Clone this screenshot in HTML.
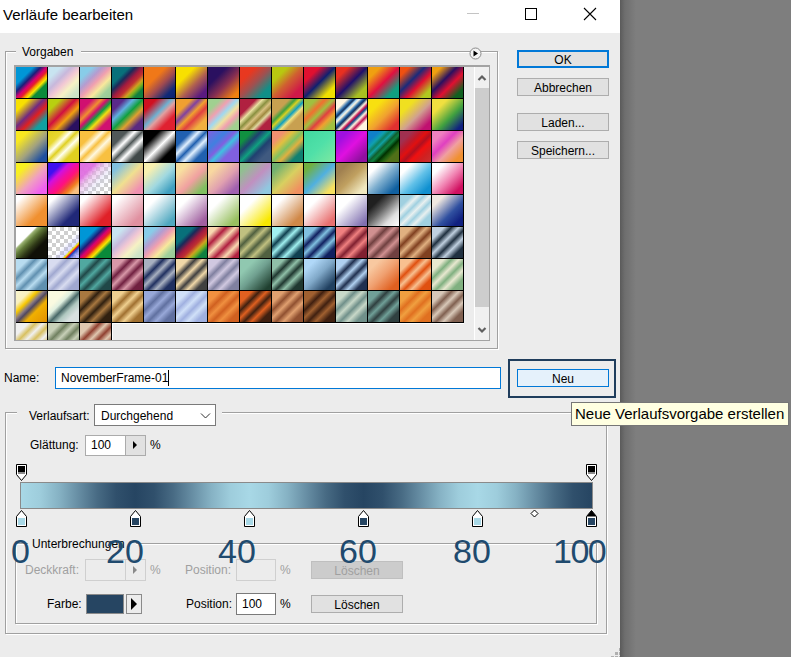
<!DOCTYPE html>
<html><head><meta charset="utf-8">
<style>
*{box-sizing:border-box;margin:0;padding:0}
html,body{width:791px;height:657px;overflow:hidden;background:#7e7e7e;font-family:"Liberation Sans",sans-serif;font-size:12px;color:#000}
.a{position:absolute}
#win{position:absolute;left:0;top:0;width:620px;height:657px;background:#ececec}
#shadow{position:absolute;left:620px;top:0;width:16px;height:657px;background:linear-gradient(to right,#5a5a5a,#6e6e6e 30%,#7e7e7e)}
#title{position:absolute;left:0;top:0;width:620px;height:33px;background:#fff}
.t{position:absolute;white-space:nowrap;line-height:1}
.gb{position:absolute;border:1px solid #a0a0a0;box-shadow:1px 1px 0 #fff inset, 1px 1px 0 #fff}
.btn{position:absolute;background:#e1e1e1;border:1px solid #adadad;text-align:center;font-size:12px;line-height:16px;padding-top:1px}
.inp{position:absolute;background:#fff;border:1px solid #7a7a7a}
#grid{position:absolute;left:16px;top:67px;width:448px;height:273px;overflow:hidden}
.sw{position:absolute;width:32px;height:32px;border-right:1px solid #000;border-bottom:1px solid #000}
.num{position:absolute;font-size:34px;color:#204a6e;line-height:1;white-space:nowrap}
</style></head><body>
<div id="shadow"></div>
<div id="win">
  <div id="title"></div>
  <div class="t" style="left:3px;top:7px;font-size:15px">Verläufe bearbeiten</div>
  <!-- title buttons -->
  <div class="a" style="left:467px;top:13px;width:12px;height:1px;background:#c4c4c4"></div>
  <div class="a" style="left:525px;top:8px;width:12px;height:12px;border:1px solid #000"></div>
  <svg class="a" style="left:583px;top:7px" width="14" height="14"><path d="M1 1L13 13M13 1L1 13" stroke="#000" stroke-width="1.1"/></svg>

  <!-- Vorgaben groupbox -->
  <div class="gb" style="left:5px;top:51px;width:493px;height:298px"></div>
  <div class="t" style="left:16px;top:46px;padding:0 8px 0 6px;background:#ececec;font-size:12px">Vorgaben</div>
  <svg class="a" style="left:469px;top:47px" width="13" height="13"><circle cx="6.5" cy="6.5" r="5.5" fill="#f4f4f4" stroke="#8a8a8a"/><path d="M4.5 3.5L9 6.5L4.5 9.5Z" fill="#000"/></svg>

  <!-- list box -->
  <div class="a" style="left:14px;top:65px;width:476px;height:276px;background:#ececec;border:2px solid #a3a3a3;border-bottom-width:1px;border-right-width:1px"></div>
  <div class="a" style="left:112px;top:323px;width:352px;height:17px;border-top:1px solid #fff;border-left:1px solid #fff"></div>
  <div id="grid">
<div class="sw" style="left:0px;top:0px;background:linear-gradient(135deg,#0096d6 0%,#0096d6 28%,#1b1f7a 40%,#d6006f 50%,#e8202a 57%,#f7a600 63%,#f7e600 68%,#0a8a3a 76%,#0a8a3a 100%)"></div>
<div class="sw" style="left:32px;top:0px;background:linear-gradient(135deg,#c8e4f0 0%,#c8e4f0 20%,#c8b8dc 38%,#f2c8d4 52%,#f6f2c4 68%,#d0e4c8 85%,#c8e0c4 100%)"></div>
<div class="sw" style="left:64px;top:0px;background:linear-gradient(135deg,#88cce8 0%,#88cce8 20%,#b49cd0 36%,#f0a0b0 50%,#f8e89c 66%,#a0d09c 82%,#98c894 100%)"></div>
<div class="sw" style="left:96px;top:0px;background:linear-gradient(135deg,#08707a 0%,#08707a 28%,#1a2a5a 38%,#a01a40 50%,#c03030 60%,#d0a020 70%,#80b020 76%,#108040 85%,#108040 100%)"></div>
<div class="sw" style="left:128px;top:0px;background:linear-gradient(135deg,#f07818 0%,#f07818 35%,#a04a50 58%,#102a78 82%,#0a2070 100%)"></div>
<div class="sw" style="left:160px;top:0px;background:linear-gradient(135deg,#f8e000 0%,#f8e000 30%,#b06050 58%,#5a1a80 85%,#5a1a80 100%)"></div>
<div class="sw" style="left:192px;top:0px;background:linear-gradient(135deg,#2a1060 0%,#2a1060 30%,#8a3050 58%,#f08010 88%,#f08010 100%)"></div>
<div class="sw" style="left:224px;top:0px;background:linear-gradient(135deg,#e83820 0%,#e83820 25%,#a05050 50%,#109088 80%,#109088 100%)"></div>
<div class="sw" style="left:256px;top:0px;background:linear-gradient(135deg,#b8c810 0%,#b8c810 25%,#d06030 50%,#d01848 80%,#d01848 100%)"></div>
<div class="sw" style="left:288px;top:0px;background:linear-gradient(135deg,#e01030 0%,#e01030 25%,#102070 50%,#f0e000 80%,#f0e000 100%)"></div>
<div class="sw" style="left:320px;top:0px;background:linear-gradient(135deg,#e83020 0%,#e83020 20%,#20106a 50%,#a8c020 80%,#a8c020 100%)"></div>
<div class="sw" style="left:352px;top:0px;background:linear-gradient(135deg,#f0a010 0%,#f0a010 20%,#e01040 50%,#10a080 80%,#10a080 100%)"></div>
<div class="sw" style="left:384px;top:0px;background:linear-gradient(135deg,#f05010 0%,#f05010 15%,#1a2a7a 40%,#e01030 60%,#b0c820 85%,#b0c820 100%)"></div>
<div class="sw" style="left:416px;top:0px;background:linear-gradient(135deg,#f0a010 0%,#f0a010 15%,#2a1060 40%,#e01030 60%,#106020 85%,#106020 100%)"></div>
<div class="sw" style="left:0px;top:32px;background:linear-gradient(135deg,#f8e000 0%,#f8e000 20%,#702a80 45%,#e02020 60%,#10a0a0 80%,#10a0a0 100%)"></div>
<div class="sw" style="left:32px;top:32px;background:linear-gradient(135deg,#b8d010 0%,#b8d010 20%,#d01040 45%,#f0a010 62%,#2a1060 82%,#2a1060 100%)"></div>
<div class="sw" style="left:64px;top:32px;background:linear-gradient(135deg,#d01070 0%,#d01070 20%,#f09030 35%,#d01070 45%,#10a040 55%,#f0e010 65%,#d01070 80%,#d01070 100%)"></div>
<div class="sw" style="left:96px;top:32px;background:linear-gradient(135deg,#5a2a8a 0%,#5a2a8a 20%,#60b0e0 35%,#10a040 50%,#e0a030 65%,#5a2a80 82%,#5a2a80 100%)"></div>
<div class="sw" style="left:128px;top:32px;background:linear-gradient(135deg,#d01020 0%,#d01020 20%,#70b0d0 45%,#e0a0a0 55%,#e02030 75%,#e02030 100%)"></div>
<div class="sw" style="left:160px;top:32px;background:linear-gradient(135deg,#f0a030 0%,#f0a030 25%,#8040a0 38%,#f0a030 50%,#e04040 62%,#f0b040 80%,#f0b040 100%)"></div>
<div class="sw" style="left:192px;top:32px;background:linear-gradient(135deg,#a0d090 0%,#a0d090 20%,#f0a0b0 35%,#a0d8f0 48%,#f0e0a0 60%,#f0a0b0 72%,#a0d090 85%,#a0d090 100%)"></div>
<div class="sw" style="left:224px;top:32px;background:linear-gradient(135deg,#b02040 0%,#b02040 26%,#e8e0a0 37%,#8a9040 47%,#d8c080 55%,#a08a40 63%,#e0d8a0 70%,#b02040 80%,#b02040 100%)"></div>
<div class="sw" style="left:256px;top:32px;background:linear-gradient(135deg,#c8a050 0%,#c8a050 28%,#40a040 38%,#d8d020 45%,#10a0c0 55%,#f0e080 63%,#c8a050 72%,#c8a050 100%)"></div>
<div class="sw" style="left:288px;top:32px;background:linear-gradient(135deg,#a0c040 0%,#a0c040 20%,#f07030 35%,#a0c040 48%,#e04040 60%,#f0a030 72%,#a0c040 85%,#a0c040 100%)"></div>
<div class="sw" style="left:320px;top:32px;background:linear-gradient(135deg,#fff5e0 0%,#fff5e0 18%,#2a6aa8 26%,#103060 30%,#a0d0f0 34%,#fff5e0 38%,#2a6aa8 44%,#103060 48%,#fff5e0 54%,#c01050 60%,#1a4a8a 64%,#fff5e0 70%,#c01050 77%,#fff5e0 84%,#fff5e0 100%)"></div>
<div class="sw" style="left:352px;top:32px;background:linear-gradient(135deg,#f8e010 0%,#f8e010 25%,#f0a030 55%,#e03030 85%,#e03030 100%)"></div>
<div class="sw" style="left:384px;top:32px;background:linear-gradient(135deg,#f0e020 0%,#f0e020 25%,#d0a090 55%,#c01070 85%,#c01070 100%)"></div>
<div class="sw" style="left:416px;top:32px;background:linear-gradient(135deg,#f0e040 0%,#f0e040 25%,#40a040 60%,#102080 90%,#102080 100%)"></div>
<div class="sw" style="left:0px;top:64px;background:linear-gradient(135deg,#f8e820 0%,#f8e820 20%,#a0a080 55%,#2050a0 85%,#2050a0 100%)"></div>
<div class="sw" style="left:32px;top:64px;background:linear-gradient(135deg,#e0d020 0%,#e8d830 25%,#fffff0 38%,#e0d020 48%,#fffff0 60%,#e0d020 75%,#e0d020 100%)"></div>
<div class="sw" style="left:64px;top:64px;background:linear-gradient(135deg,#f8c040 0%,#f8c040 25%,#fff8e0 38%,#f8c040 48%,#fff8e0 60%,#f8c040 75%,#f8c040 100%)"></div>
<div class="sw" style="left:96px;top:64px;background:linear-gradient(135deg,#505858 0%,#505858 25%,#ffffff 38%,#505858 50%,#ffffff 62%,#404848 78%,#404848 100%)"></div>
<div class="sw" style="left:128px;top:64px;background:linear-gradient(135deg,#000 0%,#000 25%,#fff 50%,#000 75%,#000 100%)"></div>
<div class="sw" style="left:160px;top:64px;background:linear-gradient(135deg,#2060b0 0%,#2060b0 25%,#e0f0ff 38%,#2060b0 50%,#e0f0ff 62%,#2060b0 78%,#2060b0 100%)"></div>
<div class="sw" style="left:192px;top:64px;background:linear-gradient(135deg,#8060e0 0%,#4080e0 30%,#8060e0 45%,#40c0e0 55%,#8060e0 70%,#8060e0 100%)"></div>
<div class="sw" style="left:224px;top:64px;background:linear-gradient(135deg,#109040 0%,#109040 20%,#204070 35%,#10a080 50%,#204070 62%,#405a80 80%,#405a80 100%)"></div>
<div class="sw" style="left:256px;top:64px;background:linear-gradient(135deg,#f09070 0%,#f09070 20%,#e0c040 35%,#80c060 50%,#e0b040 62%,#108070 80%,#108070 100%)"></div>
<div class="sw" style="left:288px;top:64px;background:linear-gradient(135deg,#40d8a0 0%,#50e0a8 50%,#80e8a0 100%)"></div>
<div class="sw" style="left:320px;top:64px;background:linear-gradient(135deg,#a010e0 0%,#a010e0 20%,#e010e0 50%,#9010a0 85%,#9010a0 100%)"></div>
<div class="sw" style="left:352px;top:64px;background:linear-gradient(135deg,#1080c8 0%,#1080c8 18%,#10a0b0 28%,#108060 36%,#10a0a0 42%,#106030 50%,#108040 56%,#003000 64%,#206010 72%,#507018 80%,#507018 100%)"></div>
<div class="sw" style="left:384px;top:64px;background:linear-gradient(135deg,#a03050 0%,#a03050 20%,#c01828 35%,#e01010 45%,#b01020 55%,#f01010 65%,#d02020 80%,#c83030 100%)"></div>
<div class="sw" style="left:416px;top:64px;background:linear-gradient(135deg,#f080c0 0%,#f080c0 20%,#e040c0 40%,#f0a0a0 60%,#f09030 85%,#f09030 100%)"></div>
<div class="sw" style="left:0px;top:96px;background:linear-gradient(135deg,#f8f020 0%,#f8f020 20%,#f0a0c0 55%,#f060f0 85%,#f060f0 100%)"></div>
<div class="sw" style="left:32px;top:96px;background:linear-gradient(135deg,#4010f0 0%,#4010f0 22%,#d010e0 35%,#f010a0 48%,#ff1080 58%,#f04040 68%,#f08020 78%,#f8c080 88%,#f8c080 100%)"></div>
<div class="sw" style="left:64px;top:96px;background:linear-gradient(135deg,#e070e0 0%,rgba(224,112,224,.95) 25%,rgba(230,170,230,.6) 40%,rgba(200,200,240,.25) 60%,rgba(255,255,255,0) 80%),repeating-conic-gradient(#cfcfcf 0 25%,#fff 0 50%) 0 0/8px 8px"></div>
<div class="sw" style="left:96px;top:96px;background:linear-gradient(135deg,#80c0e0 0%,#80c0e0 15%,#f0e090 50%,#f090b0 85%,#f090b0 100%)"></div>
<div class="sw" style="left:128px;top:96px;background:linear-gradient(135deg,#f8f0b0 0%,#f8f0b0 20%,#a0d8e0 55%,#40a0c0 85%,#40a0c0 100%)"></div>
<div class="sw" style="left:160px;top:96px;background:linear-gradient(135deg,#f8e0a0 0%,#f8e0a0 20%,#f0a0a0 55%,#80c060 85%,#80c060 100%)"></div>
<div class="sw" style="left:192px;top:96px;background:linear-gradient(135deg,#f8d8a0 0%,#f8d8a0 20%,#e0a0b0 55%,#a060b0 85%,#a060b0 100%)"></div>
<div class="sw" style="left:224px;top:96px;background:linear-gradient(135deg,#90c090 0%,#90c090 15%,#c090c0 50%,#90c8e0 85%,#90c8e0 100%)"></div>
<div class="sw" style="left:256px;top:96px;background:linear-gradient(135deg,#70b070 0%,#70b070 15%,#d8d060 50%,#f09060 85%,#f09060 100%)"></div>
<div class="sw" style="left:288px;top:96px;background:linear-gradient(135deg,#70b040 0%,#70b040 15%,#50b0e0 50%,#f8e060 85%,#f8e060 100%)"></div>
<div class="sw" style="left:320px;top:96px;background:linear-gradient(135deg,#a08050 0%,#a08050 20%,#c0a060 50%,#f0e8c0 85%,#f0e8c0 100%)"></div>
<div class="sw" style="left:352px;top:96px;background:linear-gradient(135deg,#ffffff 0%,#ffffff 20%,#80b0d0 50%,#1060a0 85%,#1060a0 100%)"></div>
<div class="sw" style="left:384px;top:96px;background:linear-gradient(135deg,#ffffff 0%,#ffffff 20%,#60c0e8 55%,#1090d0 85%,#1090d0 100%)"></div>
<div class="sw" style="left:416px;top:96px;background:linear-gradient(135deg,#ffffff 0%,#ffffff 20%,#f080b0 55%,#d01060 85%,#d01060 100%)"></div>
<div class="sw" style="left:0px;top:128px;background:linear-gradient(135deg,#fff 0%,#fff 12%,#f09030 68%,#f09030 100%)"></div>
<div class="sw" style="left:32px;top:128px;background:linear-gradient(135deg,#fff 0%,#fff 15%,#202878 72%,#202878 100%)"></div>
<div class="sw" style="left:64px;top:128px;background:linear-gradient(135deg,#fff 0%,#fff 15%,#e02028 75%,#e02028 100%)"></div>
<div class="sw" style="left:96px;top:128px;background:linear-gradient(135deg,#fff 0%,#fff 15%,#e090a0 80%,#e090a0 100%)"></div>
<div class="sw" style="left:128px;top:128px;background:linear-gradient(135deg,#fff 0%,#fff 25%,#50a8c0 85%,#50a8c0 100%)"></div>
<div class="sw" style="left:160px;top:128px;background:linear-gradient(135deg,#fff 0%,#fff 25%,#a060a0 85%,#a060a0 100%)"></div>
<div class="sw" style="left:192px;top:128px;background:linear-gradient(135deg,#fff 0%,#fff 28%,#98c060 85%,#98c060 100%)"></div>
<div class="sw" style="left:224px;top:128px;background:linear-gradient(135deg,#fff 0%,#fff 30%,#f8e800 85%,#f8e800 100%)"></div>
<div class="sw" style="left:256px;top:128px;background:linear-gradient(135deg,#fff 0%,#fff 22%,#d08848 80%,#d08848 100%)"></div>
<div class="sw" style="left:288px;top:128px;background:linear-gradient(135deg,#fff 0%,#fff 28%,#e87070 85%,#e87070 100%)"></div>
<div class="sw" style="left:320px;top:128px;background:linear-gradient(135deg,#fff 0%,#fff 30%,#8070b0 90%,#8070b0 100%)"></div>
<div class="sw" style="left:352px;top:128px;background:linear-gradient(135deg,#202020 0%,#202020 25%,#606060 45%,#a0a0a0 60%,#e0e0e0 75%,#fff 100%)"></div>
<div class="sw" style="left:384px;top:128px;background:linear-gradient(135deg,#a0d0e0 0%,#a0d0e0 20%,#e8f0f0 30%,#a0d0e0 40%,#e8f0f0 50%,#a0d0e0 60%,#e8f0f0 70%,#a0d0e0 80%,#a0d0e0 100%)"></div>
<div class="sw" style="left:416px;top:128px;background:linear-gradient(135deg,#f0e8e0 0%,#f0e8e0 20%,#3050a0 60%,#102080 85%,#102080 100%)"></div>
<div class="sw" style="left:0px;top:160px;background:linear-gradient(135deg,#ffffff 0%,#ffffff 32%,#98b070 36%,#607838 45%,#303a18 58%,#101008 70%,#101008 100%)"></div>
<div class="sw" style="left:32px;top:160px;background:linear-gradient(135deg,rgba(255,255,255,0) 55%,rgba(150,150,255,.35) 72%,#f0e000 76%,#e02020 79%,#2040c0 82%,rgba(120,120,255,.5) 90%),repeating-conic-gradient(#cfcfcf 0 25%,#fff 0 50%) 0 0/8px 8px"></div>
<div class="sw" style="left:64px;top:160px;background:linear-gradient(135deg,#0096d6 0%,#0096d6 28%,#1b1f7a 40%,#d6006f 50%,#e8202a 57%,#f7a600 63%,#f7e600 68%,#0a8a3a 76%,#0a8a3a 100%)"></div>
<div class="sw" style="left:96px;top:160px;background:linear-gradient(135deg,#c8e4f0 0%,#c8e4f0 20%,#c8b8dc 38%,#f2c8d4 52%,#f6f2c4 68%,#d0e4c8 85%,#c8e0c4 100%)"></div>
<div class="sw" style="left:128px;top:160px;background:linear-gradient(135deg,#88cce8 0%,#88cce8 20%,#b49cd0 36%,#f0a0b0 50%,#f8e89c 66%,#a0d09c 82%,#98c894 100%)"></div>
<div class="sw" style="left:160px;top:160px;background:linear-gradient(135deg,#08707a 0%,#08707a 28%,#1a2a5a 38%,#a01a40 50%,#c03030 60%,#d0a020 70%,#80b020 76%,#108040 85%,#108040 100%)"></div>
<div class="sw" style="left:192px;top:160px;background:linear-gradient(135deg,#f8d8b0 0%,#f8d8b0 15%,#b02040 30%,#f8d8b0 45%,#b02040 60%,#f8d8b0 75%,#b02040 90%,#b02040 100%)"></div>
<div class="sw" style="left:224px;top:160px;background:linear-gradient(135deg,#c0c080 0%,#c0c080 20%,#506040 32%,#c0c080 44%,#506040 56%,#c0c080 68%,#506040 82%,#506040 100%)"></div>
<div class="sw" style="left:256px;top:160px;background:linear-gradient(135deg,#a0f0f0 0%,#a0f0f0 20%,#104050 32%,#a0f0f0 44%,#104050 56%,#a0f0f0 68%,#104050 82%,#104050 100%)"></div>
<div class="sw" style="left:288px;top:160px;background:linear-gradient(135deg,#80c0e0 0%,#80c0e0 20%,#102060 32%,#80c0e0 44%,#102060 56%,#80c0e0 68%,#102060 82%,#102060 100%)"></div>
<div class="sw" style="left:320px;top:160px;background:linear-gradient(135deg,#f08080 0%,#f08080 20%,#802030 32%,#f08080 44%,#802030 56%,#f08080 68%,#802030 82%,#802030 100%)"></div>
<div class="sw" style="left:352px;top:160px;background:linear-gradient(135deg,#d09090 0%,#d09090 20%,#704040 32%,#d09090 44%,#704040 56%,#d09090 68%,#704040 82%,#704040 100%)"></div>
<div class="sw" style="left:384px;top:160px;background:linear-gradient(135deg,#e0b080 0%,#e0b080 20%,#804020 32%,#e0b080 44%,#804020 56%,#e0b080 68%,#804020 82%,#804020 100%)"></div>
<div class="sw" style="left:416px;top:160px;background:linear-gradient(135deg,#c0d0e0 0%,#c0d0e0 20%,#203040 32%,#c0d0e0 44%,#203040 56%,#c0d0e0 68%,#203040 82%,#203040 100%)"></div>
<div class="sw" style="left:0px;top:192px;background:linear-gradient(135deg,#b8dcf0 0%,#b8dcf0 20%,#6090b0 32%,#b8dcf0 44%,#6090b0 56%,#b8dcf0 68%,#6090b0 82%,#6090b0 100%)"></div>
<div class="sw" style="left:32px;top:192px;background:linear-gradient(135deg,#d8dcf0 0%,#d8dcf0 20%,#a0a8d0 32%,#d8dcf0 44%,#a0a8d0 56%,#d8dcf0 68%,#a0a8d0 82%,#a0a8d0 100%)"></div>
<div class="sw" style="left:64px;top:192px;background:linear-gradient(135deg,#50a8a0 0%,#50a8a0 20%,#204848 32%,#50a8a0 44%,#204848 56%,#50a8a0 68%,#204848 82%,#204848 100%)"></div>
<div class="sw" style="left:96px;top:192px;background:linear-gradient(135deg,#d898a8 0%,#d898a8 20%,#702040 32%,#d898a8 44%,#702040 56%,#d898a8 68%,#702040 82%,#702040 100%)"></div>
<div class="sw" style="left:128px;top:192px;background:linear-gradient(135deg,#a8b0c0 0%,#a8b0c0 20%,#203060 32%,#a8b0c0 44%,#203060 56%,#a8b0c0 68%,#203060 82%,#203060 100%)"></div>
<div class="sw" style="left:160px;top:192px;background:linear-gradient(135deg,#f0d8a8 0%,#f0d8a8 20%,#404040 32%,#f0d8a8 44%,#404040 56%,#f0d8a8 68%,#404040 82%,#404040 100%)"></div>
<div class="sw" style="left:192px;top:192px;background:linear-gradient(135deg,#d0c8e0 0%,#d0c8e0 20%,#8080a0 32%,#d0c8e0 44%,#8080a0 56%,#d0c8e0 68%,#8080a0 82%,#8080a0 100%)"></div>
<div class="sw" style="left:224px;top:192px;background:linear-gradient(135deg,#90c8b0 0%,#90c8b0 25%,#70a090 50%,#204030 90%,#204030 100%)"></div>
<div class="sw" style="left:256px;top:192px;background:linear-gradient(135deg,#90c0a8 0%,#90c0a8 20%,#203830 32%,#90c0a8 44%,#203830 56%,#90c0a8 68%,#203830 82%,#203830 100%)"></div>
<div class="sw" style="left:288px;top:192px;background:linear-gradient(135deg,#b0d8f8 0%,#b0d8f8 20%,#80a8c8 50%,#204060 85%,#204060 100%)"></div>
<div class="sw" style="left:320px;top:192px;background:linear-gradient(135deg,#b0d0f0 0%,#b0d0f0 20%,#203050 32%,#b0d0f0 44%,#203050 56%,#b0d0f0 68%,#203050 82%,#203050 100%)"></div>
<div class="sw" style="left:352px;top:192px;background:linear-gradient(135deg,#f8c8a0 0%,#f8c8a0 20%,#f0a070 50%,#e06020 85%,#e06020 100%)"></div>
<div class="sw" style="left:384px;top:192px;background:linear-gradient(135deg,#f8c090 0%,#f8c090 20%,#e05010 32%,#f8c090 44%,#e05010 56%,#f8c090 68%,#e05010 82%,#e05010 100%)"></div>
<div class="sw" style="left:416px;top:192px;background:linear-gradient(135deg,#e8e8d0 0%,#e8e8d0 20%,#80b080 32%,#e8e8d0 44%,#80b080 56%,#e8e8d0 68%,#80b080 82%,#80b080 100%)"></div>
<div class="sw" style="left:0px;top:224px;background:linear-gradient(135deg,#f8f4d0 0%,#f8f0c0 22%,#f8c800 35%,#8a7a80 45%,#504860 52%,#f0b000 65%,#e09000 100%)"></div>
<div class="sw" style="left:32px;top:224px;background:linear-gradient(135deg,#fafae0 0%,#fafae0 28%,#e0f0e0 40%,#486868 53%,#b0c8c0 65%,#d8e0e0 80%,#d8e0e0 100%)"></div>
<div class="sw" style="left:64px;top:224px;background:linear-gradient(135deg,#a87840 0%,#a87840 20%,#302010 32%,#a87840 44%,#302010 56%,#a87840 68%,#302010 82%,#302010 100%)"></div>
<div class="sw" style="left:96px;top:224px;background:linear-gradient(135deg,#f0d090 0%,#f0d090 20%,#a07030 32%,#f0d090 44%,#a07030 56%,#f0d090 68%,#a07030 82%,#a07030 100%)"></div>
<div class="sw" style="left:128px;top:224px;background:linear-gradient(135deg,#98a8d8 0%,#98a8d8 20%,#6070a0 32%,#98a8d8 44%,#6070a0 56%,#98a8d8 68%,#6070a0 82%,#6070a0 100%)"></div>
<div class="sw" style="left:160px;top:224px;background:linear-gradient(135deg,#d0e0f8 0%,#d0e0f8 20%,#a0b0e0 32%,#d0e0f8 44%,#a0b0e0 56%,#d0e0f8 68%,#a0b0e0 82%,#a0b0e0 100%)"></div>
<div class="sw" style="left:192px;top:224px;background:linear-gradient(135deg,#f09040 0%,#f09040 20%,#d06020 32%,#f09040 44%,#d06020 56%,#f09040 68%,#d06020 82%,#d06020 100%)"></div>
<div class="sw" style="left:224px;top:224px;background:linear-gradient(135deg,#e06020 0%,#e06020 20%,#402010 32%,#e06020 44%,#402010 56%,#e06020 68%,#402010 82%,#402010 100%)"></div>
<div class="sw" style="left:256px;top:224px;background:linear-gradient(135deg,#e0a070 0%,#e0a070 20%,#905030 32%,#e0a070 44%,#905030 56%,#e0a070 68%,#905030 82%,#905030 100%)"></div>
<div class="sw" style="left:288px;top:224px;background:linear-gradient(135deg,#a06030 0%,#a06030 20%,#402010 32%,#a06030 44%,#402010 56%,#a06030 68%,#402010 82%,#402010 100%)"></div>
<div class="sw" style="left:320px;top:224px;background:linear-gradient(135deg,#c8d8c8 0%,#c8d8c8 20%,#70908a 32%,#c8d8c8 44%,#70908a 56%,#c8d8c8 68%,#70908a 82%,#70908a 100%)"></div>
<div class="sw" style="left:352px;top:224px;background:linear-gradient(135deg,#70a098 0%,#70a098 20%,#304040 32%,#70a098 44%,#304040 56%,#70a098 68%,#304040 82%,#304040 100%)"></div>
<div class="sw" style="left:384px;top:224px;background:linear-gradient(135deg,#f0a040 0%,#f0a040 20%,#e07020 32%,#f0a040 44%,#e07020 56%,#f0a040 68%,#e07020 82%,#e07020 100%)"></div>
<div class="sw" style="left:416px;top:224px;background:linear-gradient(135deg,#d8c8b8 0%,#d8c8b8 20%,#806050 32%,#d8c8b8 44%,#806050 56%,#d8c8b8 68%,#806050 82%,#806050 100%)"></div>
<div class="sw" style="left:0px;top:256px;background:linear-gradient(135deg,#f0f0f0 0%,#f0f0f0 20%,#d8c060 32%,#f0f0f0 44%,#d8c060 56%,#f0f0f0 68%,#d8c060 82%,#d8c060 100%)"></div>
<div class="sw" style="left:32px;top:256px;background:linear-gradient(135deg,#c8d0b8 0%,#c8d0b8 20%,#708060 32%,#c8d0b8 44%,#708060 56%,#c8d0b8 68%,#708060 82%,#708060 100%)"></div>
<div class="sw" style="left:64px;top:256px;background:linear-gradient(135deg,#e0c8b0 0%,#e0c8b0 20%,#904030 32%,#e0c8b0 44%,#904030 56%,#e0c8b0 68%,#904030 82%,#904030 100%)"></div>
</div><!--/grid-->
  <!-- scrollbar -->
  <div class="a" style="left:474px;top:67px;width:15px;height:273px;background:#f0f0f0;border-left:1px solid #fff"></div>
  <div class="a" style="left:475px;top:88px;width:14px;height:219px;background:#cdcdcd"></div>
  <svg class="a" style="left:477px;top:74px" width="10" height="8"><path d="M1.5 6L5 2.5L8.5 6" stroke="#606060" stroke-width="2.2" fill="none"/></svg>
  <svg class="a" style="left:477px;top:326px" width="10" height="8"><path d="M1.5 2L5 5.5L8.5 2" stroke="#606060" stroke-width="2.2" fill="none"/></svg>

  <!-- right buttons -->
  <div class="btn" style="left:517px;top:50px;width:92px;height:18px;border:2px solid #0078d7;line-height:14px">OK</div>
  <div class="btn" style="left:517px;top:78px;width:92px;height:18px">Abbrechen</div>
  <div class="btn" style="left:517px;top:113px;width:92px;height:18px">Laden...</div>
  <div class="btn" style="left:517px;top:141px;width:92px;height:18px">Speichern...</div>

  <!-- Name -->
  <div class="t" style="left:4px;top:372px">Name:</div>
  <div class="inp" style="left:55px;top:367px;width:446px;height:22px;border-color:#0078d7"></div>
  <div class="t" style="left:61px;top:372px">NovemberFrame-01</div>
  <div class="a" style="left:168px;top:370px;width:1px;height:16px;background:#000"></div>

  <!-- Neu focus -->
  <div class="a" style="left:508px;top:359px;width:108px;height:39px;border:2px solid #1f3d5c"></div>
  <div class="btn" style="left:517px;top:369px;width:92px;height:18px;background:#e5f1fb;border-color:#0078d7">Neu</div>

  <!-- Verlaufsart groupbox -->
  <div class="gb" style="left:5px;top:412px;width:602px;height:222px"></div>
  <div class="a" style="left:17px;top:404px;width:205px;height:22px;background:#ececec"></div>
  <div class="t" style="left:29px;top:410px">Verlaufsart:</div>
  <div class="inp" style="left:94px;top:404px;width:122px;height:22px;border-color:#7a7a7a"></div>
  <div class="t" style="left:101px;top:410px">Durchgehend</div>
  <svg class="a" style="left:200px;top:412px" width="12" height="8"><path d="M1 1.5L5.5 6L10 1.5" stroke="#303030" stroke-width="1" fill="none"/></svg>

  <div class="t" style="left:30px;top:439px">Glättung:</div>
  <div class="inp" style="left:85px;top:435px;width:61px;height:21px;border-color:#ababab"></div>
  <div class="a" style="left:125px;top:436px;width:20px;height:19px;background:#e1e1e1;border-left:1px solid #ababab"></div>
  <svg class="a" style="left:131px;top:440px" width="8" height="10"><path d="M2 1L6 5L2 9Z" fill="#000"/></svg>
  <div class="t" style="left:91px;top:439px">100</div>
  <div class="t" style="left:150px;top:439px">%</div>

  <!-- gradient bar -->
  <div class="a" style="left:20px;top:482px;width:573px;height:27px;border:1px solid #8a8a8a;background:linear-gradient(to right,#a8d8e6 0.00%,#9ecddc 3.33%,#86b2c4 6.67%,#678ea4 10.00%,#486b84 13.33%,#30506c 16.67%,#264562 20.00%,#30506c 23.33%,#486b84 26.67%,#678ea4 30.00%,#86b2c4 33.33%,#9ecddc 36.67%,#a8d8e6 40.00%,#9ecddc 43.33%,#86b2c4 46.67%,#678ea4 50.00%,#486b84 53.33%,#30506c 56.67%,#264562 60.00%,#30506c 63.33%,#486b84 66.67%,#678ea4 70.00%,#86b2c4 73.33%,#9ecddc 76.67%,#a8d8e6 80.00%,#9ecddc 83.33%,#86b2c4 86.67%,#678ea4 90.00%,#486b84 93.33%,#30506c 96.67%,#264562 100%)"></div>

  <!-- stops -->
  <div id="stops"><svg class="a" style="left:16px;top:464px" width="12" height="18"><path d="M0.5 0.5H10.5V10.5L5.5 16.5L0.5 10.5Z" fill="#fff" stroke="#000"/><rect x="2" y="2" width="7" height="6" fill="#000"/><rect x="2" y="8" width="7" height="2" fill="#8c8c8c"/></svg><svg class="a" style="left:586px;top:464px" width="12" height="18"><path d="M0.5 0.5H10.5V10.5L5.5 16.5L0.5 10.5Z" fill="#fff" stroke="#000"/><rect x="2" y="2" width="7" height="6" fill="#000"/><rect x="2" y="8" width="7" height="2" fill="#8c8c8c"/></svg><svg class="a" style="left:16px;top:510px" width="12" height="18"><path d="M5.5 0.5L10.5 6.5V16.5H0.5V6.5Z" fill="#fff" stroke="#000"/><rect x="2" y="8" width="7" height="7" fill="#a8d8e6"/></svg><svg class="a" style="left:130px;top:510px" width="12" height="18"><path d="M5.5 0.5L10.5 6.5V16.5H0.5V6.5Z" fill="#fff" stroke="#000"/><rect x="2" y="8" width="7" height="7" fill="#264562"/></svg><svg class="a" style="left:244px;top:510px" width="12" height="18"><path d="M5.5 0.5L10.5 6.5V16.5H0.5V6.5Z" fill="#fff" stroke="#000"/><rect x="2" y="8" width="7" height="7" fill="#a8d8e6"/></svg><svg class="a" style="left:358px;top:510px" width="12" height="18"><path d="M5.5 0.5L10.5 6.5V16.5H0.5V6.5Z" fill="#fff" stroke="#000"/><rect x="2" y="8" width="7" height="7" fill="#264562"/></svg><svg class="a" style="left:472px;top:510px" width="12" height="18"><path d="M5.5 0.5L10.5 6.5V16.5H0.5V6.5Z" fill="#fff" stroke="#000"/><rect x="2" y="8" width="7" height="7" fill="#a8d8e6"/></svg><svg class="a" style="left:586px;top:510px" width="12" height="18"><path d="M5.5 0.5L10.5 6.5V16.5H0.5V6.5Z" fill="#fff" stroke="#000"/><path d="M5.5 0.5L10.5 6.5H0.5Z" fill="#000"/><rect x="2" y="8" width="7" height="7" fill="#264562"/></svg><svg class="a" style="left:530px;top:509px" width="9" height="9"><path d="M4.5 1L8 4.5L4.5 8L1 4.5Z" fill="#fff" stroke="#000"/></svg></div>

  <!-- Unterbrechungen groupbox -->
  <div class="gb" style="left:15px;top:543px;width:582px;height:81px"></div>
  <div class="t" style="left:28px;top:538px;padding:0 11px 0 4px;background:#ececec">Unterbrechungen</div>

  <div class="t" style="left:25px;top:564px;color:#a0a0a0">Deckkraft:</div>
  <div class="inp" style="left:85px;top:559px;width:61px;height:22px;border-color:#cfcfcf;background:#ececec"></div>
  <div class="a" style="left:125px;top:560px;width:20px;height:20px;border-left:1px solid #cfcfcf"></div>
  <svg class="a" style="left:131px;top:565px" width="8" height="10"><path d="M2 1L6 5L2 9Z" fill="#8a8a8a"/></svg>
  <div class="t" style="left:150px;top:564px;color:#a0a0a0">%</div>
  <div class="t" style="left:185px;top:564px;color:#a0a0a0">Position:</div>
  <div class="inp" style="left:236px;top:559px;width:40px;height:22px;border-color:#cfcfcf;background:#ececec"></div>
  <div class="t" style="left:280px;top:564px;color:#a0a0a0">%</div>
  <div class="btn" style="left:311px;top:561px;width:92px;height:18px;background:#cccccc;border-color:#bfbfbf;color:#a0a0a0">Löschen</div>

  <div class="t" style="left:47px;top:598px">Farbe:</div>
  <div class="a" style="left:86px;top:594px;width:38px;height:20px;background:#264562;border:1px solid #8a8a8a"></div>
  <div class="a" style="left:126px;top:594px;width:16px;height:20px;background:#ececec;border:1px solid #8a8a8a"></div>
  <svg class="a" style="left:129px;top:597px" width="10" height="14"><path d="M2 1L8 7L2 13Z" fill="#000"/></svg>
  <div class="t" style="left:186px;top:598px">Position:</div>
  <div class="inp" style="left:236px;top:593px;width:40px;height:22px;border-color:#7a7a7a"></div>
  <div class="t" style="left:242px;top:598px">100</div>
  <div class="t" style="left:280px;top:598px">%</div>
  <div class="btn" style="left:311px;top:595px;width:92px;height:18px">Löschen</div>

  <!-- big numbers -->
  <div class="num" style="left:11px;top:534px">0</div>
  <div class="num" style="left:106px;top:534px">20</div>
  <div class="num" style="left:218px;top:534px">40</div>
  <div class="num" style="left:339px;top:534px">60</div>
  <div class="num" style="left:453px;top:534px">80</div>
  <div class="num" style="left:553px;top:534px;letter-spacing:-1.5px">100</div>


<div class="a" style="left:615px;top:652px;width:3px;height:3px;background:#b0b0b0"></div><div class="a" style="left:611px;top:656px;width:3px;height:3px;background:#b0b0b0"></div><div class="a" style="left:615px;top:656px;width:3px;height:3px;background:#b0b0b0"></div><div class="a" style="left:619px;top:648px;width:1px;height:3px;background:#b0b0b0"></div><div class="a" style="left:619px;top:652px;width:1px;height:3px;background:#b0b0b0"></div><div class="a" style="left:619px;top:656px;width:1px;height:3px;background:#b0b0b0"></div>
  <!-- tooltip -->
  <div class="a" style="left:571px;top:402px;width:218px;height:24px;background:#ffffe1;border:1px solid #767676"></div>
  <div class="t" style="left:575px;top:406px;font-size:15px">Neue Verlaufsvorgabe erstellen</div>
</div>
</body></html>
